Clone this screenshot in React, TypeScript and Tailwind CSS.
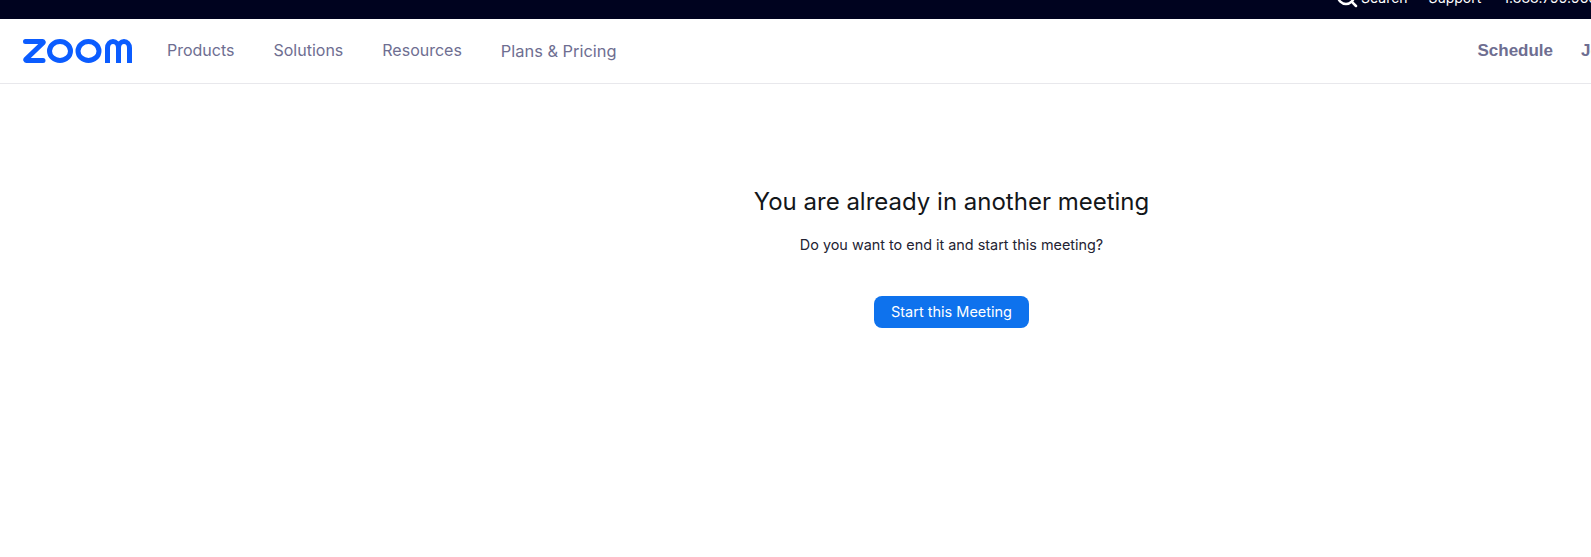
import { Search } from 'lucide-react';

const navLinks = ['Products', 'Solutions', 'Resources'];

function ZoomLogo() {
  return (
    <svg width="109" height="24" viewBox="0 0 109 24" fill="none" stroke="#0b5cff" strokeWidth="5">
      <path d="M2.5 2.5h17a.8.8 0 0 1 .6 1.3L2.9 20.2a.8.8 0 0 0 .6 1.3h16.5" strokeLinecap="round" strokeLinejoin="round" />
      <ellipse cx="37" cy="12" rx="10.5" ry="9.5" />
      <ellipse cx="65.5" cy="12" rx="10.5" ry="9.5" />
      <path d="M84.5 24V9a5.5 6.5 0 0 1 11 0v15M95.5 9a5.5 6.5 0 0 1 11 0v15" />
    </svg>
  );
}

export default function App() {
  return (
    <div className="h-[557px] overflow-hidden bg-white font-['Inter',sans-serif]">
      <div className="flex h-[19px] items-end gap-[21px] overflow-hidden whitespace-nowrap bg-[#00031f] pb-[11px] pl-[1335px] text-sm text-white">
        <span className="flex items-center gap-[2px]">
          <Search size={24} strokeWidth={2.5} className="-my-[2px] -translate-y-px" />
          Search
        </span>
        <span>Support</span>
        <span className="ml-[1px]">1.888.799.9666</span>
      </div>

      <header className="flex h-[65px] items-center overflow-hidden whitespace-nowrap border-b border-[#e8e8ec] pl-[23px]">
        <ZoomLogo />
        <nav className="mb-[1px] ml-[35px] flex items-center gap-[39px] text-base text-[#6e6e91]">
          {navLinks.map((link) => (
            <a key={link}>{link}</a>
          ))}
          <a className="mt-[2px] text-[16.4px]">Plans &amp; Pricing</a>
        </nav>
        <div className="ml-auto flex gap-[28px] font-['Liberation_Sans',sans-serif] text-[17px] font-bold text-[#6e6e91]">
          <a>Schedule</a>
          <a className="mr-[-25px]">Join</a>
        </div>
      </header>

      <main className="flex flex-col items-center pl-[312px] pt-[102px]">
        <h1 className="text-2xl leading-8 text-[#131619]">You are already in another meeting</h1>
        <p className="mt-[15px] text-[14.4px] leading-6 text-[#232333]">Do you want to end it and start this meeting?</p>
        <button className="mt-[39px] h-8 w-[155px] rounded-lg bg-[#0e72ed] text-[14.5px] text-white">Start this Meeting</button>
      </main>
    </div>
  );
}
